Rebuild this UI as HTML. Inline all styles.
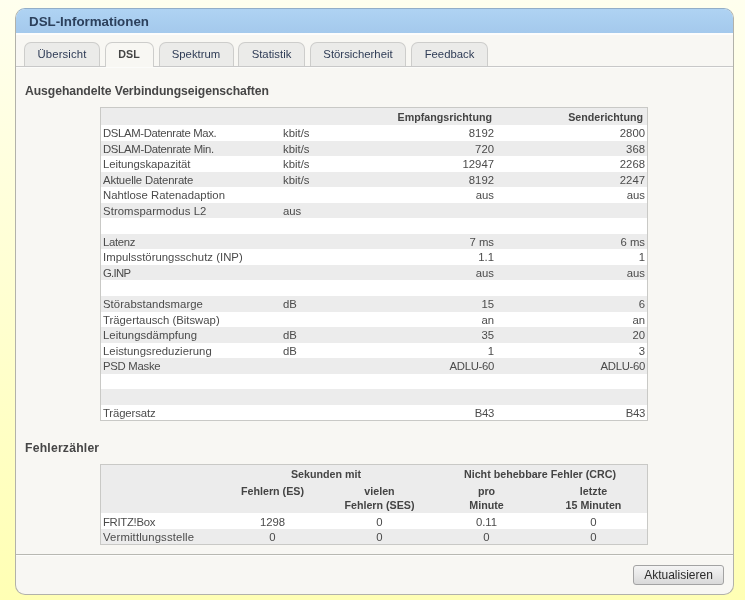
<!DOCTYPE html>
<html><head><meta charset="utf-8"><title>DSL-Informationen</title>
<style>
*{box-sizing:border-box;margin:0;padding:0}
html,body{width:745px;height:600px;overflow:hidden}
body{font-family:"Liberation Sans",sans-serif;font-size:11.33px;color:#4b4b4b;
 background:linear-gradient(to bottom,#ffffee 0%,#ffffb4 100%);position:relative}
#panel{position:absolute;left:15px;top:8px;width:719px;height:587px;background:#f8f7f3;
 border:1px solid #b2b2aa;border-radius:10px;overflow:hidden;border-top-color:#93aec8}
#hdr{position:absolute;left:0;top:0;width:100%;height:26px;background:linear-gradient(#afd3f3,#a4c9ec);border-bottom:2px solid #fdfdfc}
#hdr span{position:absolute;left:13px;top:4px;font-weight:bold;font-size:13.33px;color:#2c405c;line-height:17px;white-space:nowrap}
#wrap{position:absolute;left:0;top:0;width:745px;height:600px;will-change:transform}
.abs{position:absolute;white-space:nowrap}
#tabline{position:absolute;left:16px;top:66px;width:717px;height:1px;background:#c8c8c8;box-shadow:0 1px 0 #fcfcfa}
.tab{position:absolute;top:42px;height:25px;border:1px solid #cdcdcb;border-bottom:none;border-radius:7px 7px 0 0;background:#ebebe9;
 color:#2f3c56;text-align:center;line-height:22px;font-size:11.33px;white-space:nowrap}
.tab.act{background:#f8f7f3;color:#444;font-weight:bold;height:25px;z-index:2;font-size:10.7px}
h2{position:absolute;left:25px;font-size:12.2px;letter-spacing:-0.07px;font-weight:bold;color:#464646;line-height:16px;white-space:nowrap}
.tbl{position:absolute;left:100px;width:548px;border:1px solid #c9c9c6;background:#fff}
.r{position:absolute;left:101px;width:546px;line-height:15px;white-space:nowrap}
.r.w{background:#fff}.r.g{background:#ececec}
.r span{position:absolute;top:1px}
.c1{left:2px}.c2{left:182px}.c3{right:153px;text-align:right}.c4{right:2px;text-align:right}
.hd{background:#ececec;font-weight:bold;color:#444;font-size:10.7px}
#sep{position:absolute;left:16px;top:554px;width:717px;height:1px;background:#b8b8b2;box-shadow:0 1px 0 #fdfdfb}
#btn{position:absolute;left:633px;top:565px;width:91px;height:20px;border:1px solid #a3a3a3;border-radius:3px;
 background:linear-gradient(#f4f4f4,#e9e9e9 45%,#d9d9d9);color:#2b2b2b;font-size:12px;text-align:center;line-height:18px}
.cc{position:absolute;width:107px;text-align:center;white-space:nowrap;line-height:14px}
</style></head><body>
<div id="wrap">
<div id="panel"><div id="hdr"><span>DSL-Informationen</span></div></div>
<div class="tab" style="left:24px;width:76px;letter-spacing:0.12px">Übersicht</div>
<div class="tab act" style="left:105px;width:49px;padding-right:1px">DSL</div>
<div class="tab" style="left:159px;width:75px;padding-right:1px">Spektrum</div>
<div class="tab" style="left:238px;width:67px">Statistik</div>
<div class="tab" style="left:310px;width:96px">Störsicherheit</div>
<div class="tab" style="left:411px;width:77px">Feedback</div>
<div id="tabline"></div>
<h2 style="top:83px">Ausgehandelte Verbindungseigenschaften</h2>
<div class="tbl" style="top:107px;height:314px"></div>
<div class="r hd" style="top:108px;height:17px;line-height:17px"><span style="right:155px">Empfangsrichtung</span><span style="right:4px">Senderichtung</span></div>
<div class="r w" style="top:125px;height:16px"><span class="c1" style="letter-spacing:-0.346px">DSLAM-Datenrate Max.</span><span class="c2">kbit/s</span><span class="c3">8192</span><span class="c4">2800</span></div>
<div class="r g" style="top:141px;height:15px"><span class="c1" style="letter-spacing:-0.317px">DSLAM-Datenrate Min.</span><span class="c2">kbit/s</span><span class="c3">720</span><span class="c4">368</span></div>
<div class="r w" style="top:156px;height:16px"><span class="c1" style="letter-spacing:-0.043px">Leitungskapazität</span><span class="c2">kbit/s</span><span class="c3">12947</span><span class="c4">2268</span></div>
<div class="r g" style="top:172px;height:15px"><span class="c1" style="letter-spacing:-0.165px">Aktuelle Datenrate</span><span class="c2">kbit/s</span><span class="c3">8192</span><span class="c4">2247</span></div>
<div class="r w" style="top:187px;height:16px"><span class="c1" style="letter-spacing:0.020px">Nahtlose Ratenadaption</span><span class="c2"></span><span class="c3">aus</span><span class="c4">aus</span></div>
<div class="r g" style="top:203px;height:15px"><span class="c1" style="letter-spacing:0.087px">Stromsparmodus L2</span><span class="c2">aus</span><span class="c3"></span><span class="c4"></span></div>
<div class="r w" style="top:218px;height:16px"><span class="c1"></span><span class="c2"></span><span class="c3"></span><span class="c4"></span></div>
<div class="r g" style="top:234px;height:15px"><span class="c1" style="letter-spacing:-0.304px">Latenz</span><span class="c2"></span><span class="c3">7 ms</span><span class="c4">6 ms</span></div>
<div class="r w" style="top:249px;height:16px"><span class="c1" style="letter-spacing:0.022px">Impulsstörungsschutz (INP)</span><span class="c2"></span><span class="c3">1.1</span><span class="c4">1</span></div>
<div class="r g" style="top:265px;height:15px"><span class="c1" style="letter-spacing:-0.687px">G.INP</span><span class="c2"></span><span class="c3">aus</span><span class="c4">aus</span></div>
<div class="r w" style="top:280px;height:16px"><span class="c1"></span><span class="c2"></span><span class="c3"></span><span class="c4"></span></div>
<div class="r g" style="top:296px;height:16px"><span class="c1" style="letter-spacing:0.064px">Störabstandsmarge</span><span class="c2">dB</span><span class="c3">15</span><span class="c4">6</span></div>
<div class="r w" style="top:312px;height:15px"><span class="c1" style="letter-spacing:0.000px">Trägertausch (Bitswap)</span><span class="c2"></span><span class="c3">an</span><span class="c4">an</span></div>
<div class="r g" style="top:327px;height:16px"><span class="c1" style="letter-spacing:0.051px">Leitungsdämpfung</span><span class="c2">dB</span><span class="c3">35</span><span class="c4">20</span></div>
<div class="r w" style="top:343px;height:15px"><span class="c1" style="letter-spacing:0.019px">Leistungsreduzierung</span><span class="c2">dB</span><span class="c3">1</span><span class="c4">3</span></div>
<div class="r g" style="top:358px;height:16px"><span class="c1" style="letter-spacing:-0.277px">PSD Maske</span><span class="c2"></span><span class="c3" style="letter-spacing:-0.3px">ADLU-60</span><span class="c4" style="letter-spacing:-0.3px">ADLU-60</span></div>
<div class="r w" style="top:374px;height:15px"><span class="c1"></span><span class="c2"></span><span class="c3"></span><span class="c4"></span></div>
<div class="r g" style="top:389px;height:16px"><span class="c1"></span><span class="c2"></span><span class="c3"></span><span class="c4"></span></div>
<div class="r w" style="top:405px;height:15px"><span class="c1" style="letter-spacing:-0.125px">Trägersatz</span><span class="c2"></span><span class="c3" style="letter-spacing:-0.3px">B43</span><span class="c4" style="letter-spacing:-0.3px">B43</span></div>
<h2 style="top:440px;letter-spacing:0.21px">Fehlerzähler</h2>
<div class="tbl" style="top:464px;height:81px"></div>
<div class="r hd" style="top:465px;height:48px"></div>
<div class="cc hd" style="left:219px;width:214px;top:467px">Sekunden mit</div>
<div class="cc hd" style="left:433px;width:214px;top:467px">Nicht behebbare Fehler (CRC)</div>
<div class="cc hd" style="left:219px;top:484px">Fehlern (ES)</div>
<div class="cc hd" style="left:326px;top:484px">vielen<br>Fehlern (SES)</div>
<div class="cc hd" style="left:433px;top:484px">pro<br>Minute</div>
<div class="cc hd" style="left:540px;top:484px">letzte<br>15 Minuten</div>
<div class="r w" style="top:513px;height:16px;line-height:16px"><span class="c1" style="letter-spacing:-0.3px">FRITZ!Box</span></div>
<div class="cc" style="left:219px;top:515px">1298</div><div class="cc" style="left:326px;top:515px">0</div><div class="cc" style="left:433px;top:515px">0.11</div><div class="cc" style="left:540px;top:515px">0</div>
<div class="r g" style="top:529px;height:15px;line-height:15px"><span class="c1" style="letter-spacing:0.13px">Vermittlungsstelle</span></div>
<div class="cc" style="left:219px;top:530px">0</div><div class="cc" style="left:326px;top:530px">0</div><div class="cc" style="left:433px;top:530px">0</div><div class="cc" style="left:540px;top:530px">0</div>
<div id="sep"></div>
<div id="btn">Aktualisieren</div>
</div>
</body></html>
